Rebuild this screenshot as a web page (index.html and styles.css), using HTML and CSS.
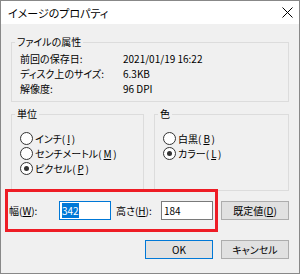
FILE: index.html
```html
<!DOCTYPE html>
<html lang="ja">
<head>
<meta charset="UTF-8">
<title>イメージのプロパティ</title>
<link rel="stylesheet" href="styles.css">
</head>
<body>
    <div class="window">
        <div class="titlebar">
            <span class="title">イメージのプロパティ</span>
            <svg class="close" width="11" height="11" viewBox="0 0 11 11">
                <path d="M0.5 0.5 L10.5 10.5 M10.5 0.5 L0.5 10.5" stroke="#000" stroke-width="1" fill="none"/>
            </svg>
        </div>

        <div class="content">
            <fieldset class="group">
                <legend>ファイルの属性</legend>
                <div class="attrs">
                    <span>前回の保存日:</span><span>2021/01/19 16:22</span>
                    <span>ディスク上のサイズ:</span><span>6.3KB</span>
                    <span>解像度:</span><span>96 DPI</span>
                </div>
            </fieldset>

            <div class="groups">
                <fieldset class="group radios">
                    <legend>単位</legend>
                    <div class="radio-row"><span class="radio"></span>インチ(<u>I</u>)</div>
                    <div class="radio-row"><span class="radio"></span>センチメートル(<u>M</u>)</div>
                    <div class="radio-row"><span class="radio checked"></span>ピクセル(<u>P</u>)</div>
                </fieldset>
                <fieldset class="group radios">
                    <legend>色</legend>
                    <div class="radio-row"><span class="radio"></span>白黒(<u>B</u>)</div>
                    <div class="radio-row"><span class="radio checked"></span>カラー(<u>L</u>)</div>
                </fieldset>
            </div>

            <div class="size-row">
                <span class="size-label">幅(<u>W</u>):</span>
                <div class="field focused"><span class="sel">342</span></div>
                <span class="size-label height">高さ(<u>H</u>):</span>
                <div class="field">184</div>
                <button class="btn">既定値(<u>D</u>)</button>
            </div>

            <div class="actions">
                <button class="btn default">OK</button>
                <button class="btn">キャンセル</button>
            </div>
        </div>

        <!-- annotation -->
        <div class="highlight"></div>
    </div>
</body>
</html>
```

FILE: styles.css
```css
body {
    margin: 0;
    font-family: "Noto Sans CJK JP", sans-serif;
    font-feature-settings: "palt";
    font-size: 10px;
    color: #000;
}

.window {
    position: relative;
    width: 300px;
    height: 274px;
    box-sizing: border-box;
    border: 1px solid #888;
    background: #f0f0f0;
}

.titlebar {
    height: 23px;
    background: #fff;
    display: flex;
    align-items: center;
    justify-content: space-between;
    padding: 0 6px 0 7px;
}

.title {
    font-size: 11px;
}

.content {
    padding: 11px 10px 0 10px;
}

.group {
    margin: 0;
    padding: 2px 8px 5px 8px;
    border: 1px solid #dcdcdc;
    min-width: 0;
}

.group legend {
    margin-left: -5px;
    padding: 0 2px;
    line-height: 14px;
}

.attrs {
    display: grid;
    grid-template-columns: 103px 1fr;
    line-height: 15px;
}

.groups {
    display: grid;
    grid-template-columns: 133px 135px;
    gap: 10px;
    margin-top: 5px;
}

.radios {
    padding-top: 10px;
    padding-bottom: 14px;
}

.radio-row {
    display: flex;
    align-items: center;
    gap: 2px;
    height: 15px;
}

.radio-row u {
    letter-spacing: -0.5px;
}

.radio {
    position: relative;
    width: 11px;
    height: 11px;
    border: 1px solid #333;
    border-radius: 50%;
    background: #fff;
}

.radio.checked::after {
    content: "";
    position: absolute;
    left: 3px;
    top: 3px;
    width: 5px;
    height: 5px;
    border-radius: 50%;
    background: #333;
}

.size-row {
    display: flex;
    align-items: center;
    margin: 9px 0 0 -2px;
    height: 20px;
}

.size-label {
    width: 50px;
}

.size-label.height {
    width: 45px;
    margin-left: 5px;
}

.field {
    width: 52px;
    height: 19px;
    box-sizing: border-box;
    border: 1px solid #7a7a7a;
    background: #fff;
    padding-left: 2px;
    line-height: 17px;
}

.field.focused {
    border-color: #0078d7;
}

.sel {
    background: #0078d7;
    color: #fff;
}

.btn {
    font: inherit;
    width: 68px;
    height: 19px;
    padding: 0;
    box-sizing: border-box;
    border: 1px solid #adadad;
    background: #e1e1e1;
    color: #000;
}

.size-row .btn {
    margin-left: auto;
}

.actions {
    display: flex;
    justify-content: flex-end;
    gap: 8px;
    margin-top: 20px;
}

.btn.default {
    border-color: #0078d7;
}

.highlight {
    position: absolute;
    left: 4px;
    top: 188px;
    width: 207px;
    height: 37px;
    border: 3px solid #ee1c25;
}
```
